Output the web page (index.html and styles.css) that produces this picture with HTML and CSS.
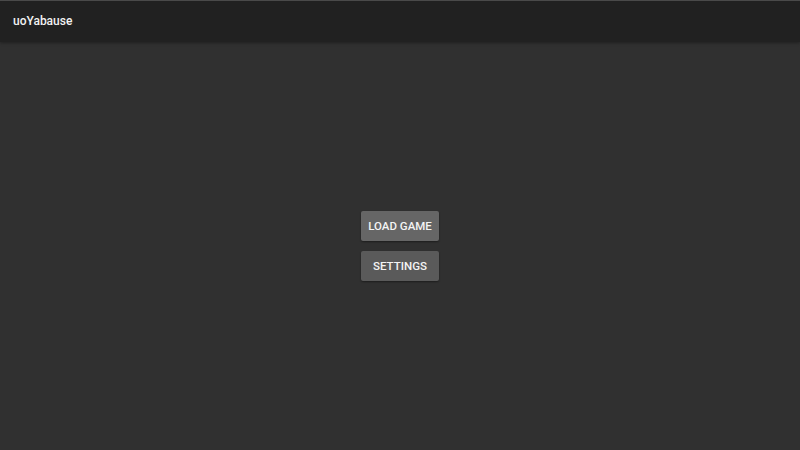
FILE: index.html
```html
<html>
  <head>
    <link rel="stylesheet" href="styles.css">
  </head>
  <body>
    <div class="toolbar">
      <span class="title">uoYabause</span>
    </div>
    <div class="content">
      <button class="btn focused">Load Game</button>
      <button class="btn">Settings</button>
    </div>
  </body>
</html>
```

FILE: styles.css
```css
html, body {
  margin: 0;
  height: 100%;
}

body {
  display: flex;
  flex-direction: column;
  background: #303030;
  font-family: Roboto, "Liberation Sans", sans-serif;
}

.toolbar {
  height: 41px;
  border-top: 1px solid #4a4a4a;
  background: #212121;
  display: flex;
  align-items: center;
  padding-left: 13px;
  box-shadow: 0 1px 3px rgba(0, 0, 0, 0.35);
  position: relative;
  z-index: 1;
}

.title {
  color: #f2f2f2;
  font-size: 12px;
  font-weight: 500;
  margin-top: -2px;
}

.content {
  flex: 1;
  display: flex;
  flex-direction: column;
  align-items: center;
  justify-content: center;
  gap: 10px;
}

.btn {
  width: 78px;
  height: 30px;
  border: none;
  border-radius: 2px;
  background: #5a5a5a;
  color: #f4f4f4;
  font-family: Roboto, "Liberation Sans", sans-serif;
  font-size: 11.5px;
  font-weight: 500;
  text-transform: uppercase;
  padding: 0;
  box-shadow: 0 1px 2px rgba(0, 0, 0, 0.4);
}

.btn.focused {
  background: #666666;
}
```
